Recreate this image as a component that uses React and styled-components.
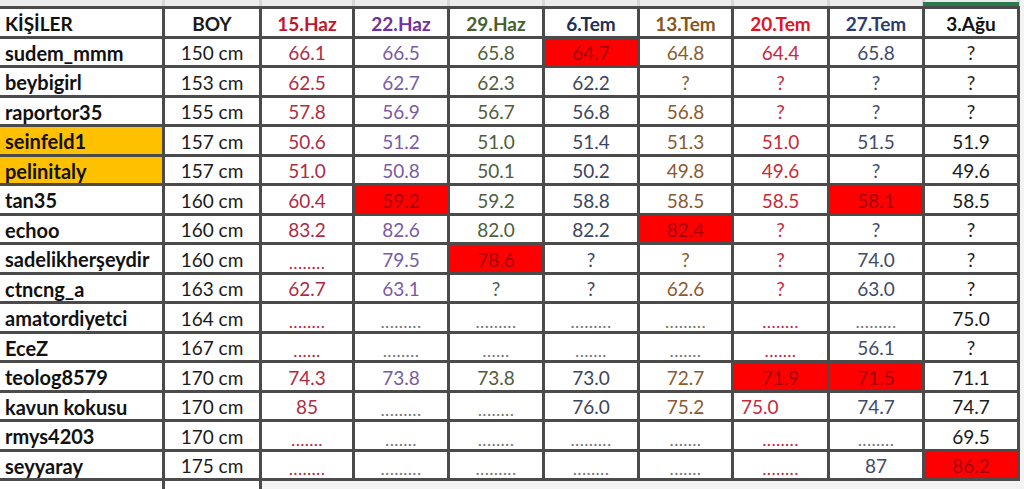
import React from "react";
import styled, { createGlobalStyle } from "styled-components";

const GlobalStyle = createGlobalStyle`
  html, body {
    margin: 0;
    padding: 0;
    background: #f3f3f3;
  }
  body {
    font-family: Lato, "Open Sans", "Noto Sans", sans-serif;
  }
`;

// column widths match the sheet grid lines
const COLUMNS = "162px 94px 90px 92px 92px 92px 91px 93px 92px 92px";

const COLS = [
  { label: "15.Haz", head: "#c0172f", text: "#b02b3f", dots: "#c0283a" },
  { label: "22.Haz", head: "#7030a0", text: "#7a5aa4", dots: "#777777" },
  { label: "29.Haz", head: "#4a5e2a", text: "#4f5d3c", dots: "#777777" },
  { label: "6.Tem", head: "#1f2d5a", text: "#3b4561", dots: "#777777" },
  { label: "13.Tem", head: "#8a5320", text: "#8a5a2e", dots: "#777777" },
  { label: "20.Tem", head: "#e3131f", text: "#c8283a", dots: "#c8283a" },
  { label: "27.Tem", head: "#2e3b6b", text: "#414b68", dots: "#777777" },
  { label: "3.Ağu", head: "#111111", text: "#1a1a1a", dots: "#777777" },
];

// "!" marks a red cell, "<" a left aligned cell
const ROWS = [
  ["sudem_mmm", "150 cm", ["66.1", "66.5", "65.8", "!64.7", "64.8", "64.4", "65.8", "?"]],
  ["beybigirl", "153 cm", ["62.5", "62.7", "62.3", "62.2", "?", "?", "?", "?"]],
  ["raportor35", "155 cm", ["57.8", "56.9", "56.7", "56.8", "56.8", "?", "?", "?"]],
  ["seinfeld1", "157 cm", ["50.6", "51.2", "51.0", "51.4", "51.3", "51.0", "51.5", "51.9"], true],
  ["pelinitaly", "157 cm", ["51.0", "50.8", "50.1", "50.2", "49.8", "49.6", "?", "49.6"], true],
  ["tan35", "160 cm", ["60.4", "!59.2", "59.2", "58.8", "58.5", "58.5", "!58.1", "58.5"]],
  ["echoo", "160 cm", ["83.2", "82.6", "82.0", "82.2", "!82.4", "?", "?", "?"]],
  ["sadelikherşeydir", "160 cm", ["........", "79.5", "!78.6", "?", "?", "?", "74.0", "?"]],
  ["ctncng_a", "163 cm", ["62.7", "63.1", "?", "?", "62.6", "?", "63.0", "?"]],
  ["amatordiyetci", "164 cm", ["........", ".........", ".........", ".........", ".........", "........", ".........", "75.0"]],
  ["EceZ", "167 cm", ["......", "........", "......", ".......", ".......", ".......", "56.1", "?"]],
  ["teolog8579", "170 cm", ["74.3", "73.8", "73.8", "73.0", "72.7", "!71.9", "!71.5", "71.1"]],
  ["kavun kokusu", "170 cm", ["85", ".........", "........", "76.0", "75.2", "<75.0", "74.7", "74.7"]],
  ["rmys4203", "170 cm", [".......", ".......", "........", ".........", ".......", "........", "........", "69.5"]],
  ["seyyaray", "175 cm", ["........", ".........", ".........", "........", ".......", "........", "87", "!86.2"]],
];

const Page = styled.div`
  width: 1024px;
  height: 489px;
  overflow: hidden;
  display: flex;
  flex-direction: column;
`;

const TopStrip = styled.div`
  display: grid;
  grid-template-columns: ${COLUMNS};
  column-gap: 3px;
  height: 6px;
  width: 1020px;
  background: #d6d6d6;
`;

const StripCell = styled.div`
  background: #ececec;
  position: relative;

  ${(p) =>
    p.$active &&
    `
    &::after {
      content: "";
      position: absolute;
      left: -2px;
      right: -2px;
      top: 2px;
      bottom: 0;
      background: #2b7a4b;
    }
  `}
`;

const Sheet = styled.div`
  display: grid;
  grid-template-columns: ${COLUMNS};
  grid-auto-rows: 26.5px;
  gap: 3px;
  padding: 3px 3px 3px 0;
  width: 1017px;
  background: #4b4b4b;
`;

const Cell = styled.div`
  display: flex;
  align-items: ${(p) => (p.$dots ? "flex-end" : "center")};
  justify-content: ${(p) => (p.$align === "left" ? "flex-start" : "center")};
  padding: ${(p) => (p.$dots ? "0 0 5px" : "2px 0 0")};
  padding-left: ${(p) => (p.$align === "left" ? "7px" : "0")};
  background: ${(p) =>
    p.$fill === "red" ? "#ff0000" : p.$fill === "yellow" ? "#ffc000" : "#ffffff"};
  color: ${(p) => p.$color || "#1a1a1a"};
  font-size: 19px;
  font-weight: ${(p) => (p.$bold ? 700 : 400)};
  line-height: 1;
  white-space: nowrap;
  overflow: hidden;
`;

const NameCell = styled(Cell)`
  padding-left: 5px;
  font-size: ${(p) => (p.$head ? "19px" : "20px")};
  font-weight: 700;
  color: #111;
`;

const Faded = styled.span`
  color: rgba(70, 0, 20, 0.5);
`;

const Dots = styled.span`
  color: ${(p) => p.$color};
  font-size: 18px;
  line-height: 10px;
  letter-spacing: 0.3px;
`;

const BottomStrip = styled.div`
  display: grid;
  grid-template-columns: 162px 94px 1fr;
  column-gap: 3px;
  height: 8px;
  width: 1020px;
  background: #4b4b4b;
`;

const BottomCell = styled.div`
  background: ${(p) => (p.$light ? "#f3f3f3" : "#ffffff")};
`;

function Value({ raw, col }) {
  const red = raw.startsWith("!");
  const left = raw.startsWith("<");
  const text = red || left ? raw.slice(1) : raw;
  const dots = text.startsWith(".");

  return (
    <Cell
      $fill={red ? "red" : undefined}
      $color={col.text}
      $align={left ? "left" : "center"}
      $dots={dots}
    >
      {dots ? <Dots $color={col.dots}>{text}</Dots> : red ? <Faded>{text}</Faded> : text}
    </Cell>
  );
}

export default function App() {
  return (
    <Page>
      <GlobalStyle />
      <TopStrip>
        {Array.from({ length: 10 }).map((_, i) => (
          <StripCell key={i} $active={i === 9} />
        ))}
      </TopStrip>

      <Sheet>
        <NameCell $align="left" $head>
          KİŞİLER
        </NameCell>
        <Cell $bold>BOY</Cell>
        {COLS.map((c) => (
          <Cell key={c.label} $bold $color={c.head}>
            {c.label}
          </Cell>
        ))}

        {ROWS.map(([name, boy, values, highlight]) => (
          <React.Fragment key={name}>
            <NameCell $align="left" $fill={highlight ? "yellow" : undefined}>
              {name}
            </NameCell>
            <Cell>{boy}</Cell>
            {values.map((v, i) => (
              <Value key={i} raw={v} col={COLS[i]} />
            ))}
          </React.Fragment>
        ))}
      </Sheet>

      <BottomStrip>
        <BottomCell />
        <BottomCell />
        <BottomCell $light />
      </BottomStrip>
    </Page>
  );
}
